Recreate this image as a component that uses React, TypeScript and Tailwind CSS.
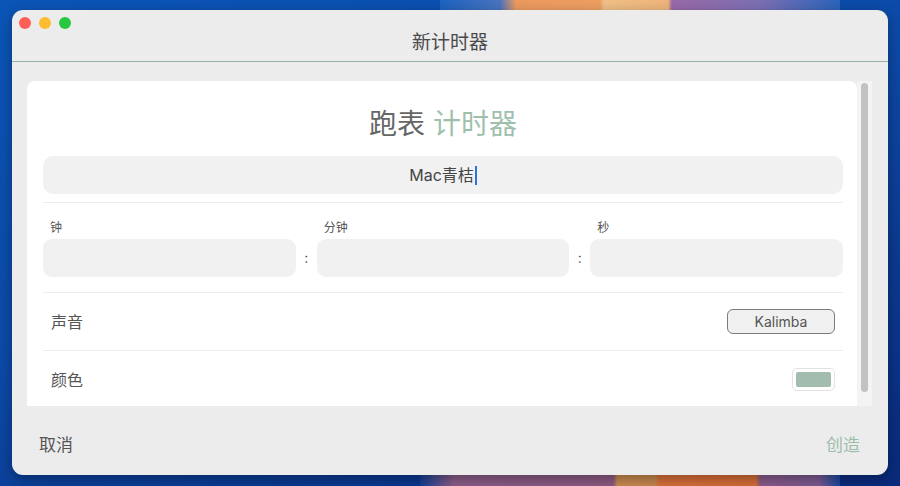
import React from "react";

const FONT = "font-['Inter','Noto_Sans_CJK_SC',sans-serif]";

const TimeField = ({ label }: { label: string }) => (
    <div className="flex flex-col flex-1">
        <span className="pl-[7px] text-[12px] leading-[16px] text-[#555]">{label}</span>
        <div className="mt-[3px] h-[38px] rounded-[9px] bg-[#f1f1f1]" />
    </div>
);

const Colon = () => (
    <div className="w-[21px] flex items-end justify-center h-[57px] pb-[10px] text-[14px] leading-[18px] text-[#555]">
        :
    </div>
);

export default function App() {
    return (
        <div
            className={`relative w-[900px] h-[486px] overflow-hidden bg-[linear-gradient(160deg,#0b55b8_0%,#0c4aa8_45%,#0a2a7c_100%)] ${FONT}`}
        >
            {/* wallpaper shapes peeking out around the window */}
            <div className="absolute top-0 left-[440px] w-[400px] h-[14px] bg-[linear-gradient(90deg,#1c63c0_0%,#4a74c0_15%,#ed9a5e_19%,#ef9f62_40%,#f0c088_41%,#efb57a_57%,#9a6aa8_58%,#7c70b4_80%,#2b64bc_100%)]" />
            <div className="absolute bottom-0 left-[420px] w-[420px] h-[14px] bg-[linear-gradient(90deg,#123f94_0%,#8a5c88_8%,#8c5a82_46%,#c98a50_47%,#c5884e_56%,#d8703a_57%,#d46c36_80%,#8a5a8a_81%,#7a5a90_95%,#1748a0_100%)]" />

            <div className="relative ml-[12px] mt-[10px] w-[876px] h-[465px] rounded-[11px] bg-[#ececed] shadow-[0_4px_14px_rgba(0,0,0,0.35)] flex flex-col overflow-hidden">
                {/* title bar */}
                <div className="relative h-[52px] border-b border-[#98b3a5] flex justify-center pt-[21px]">
                    <div className="absolute left-[7px] top-[7px] flex gap-[8px]">
                        <span className="w-[12px] h-[12px] rounded-full bg-[#fe5f57]" />
                        <span className="w-[12px] h-[12px] rounded-full bg-[#febc2e]" />
                        <span className="w-[12px] h-[12px] rounded-full bg-[#28c840]" />
                    </div>
                    <span className="text-[19px] leading-[24px] text-[#4a4a4a]">新计时器</span>
                </div>

                {/* scroll view */}
                <div className="flex flex-row pl-[15px] pr-[16px] pt-[19px]">
                    <div className="w-[830px] h-[325px] overflow-hidden rounded-t-[8px] bg-white pl-[16px] pr-[14px] pt-[26px]">
                        <h1 className="text-center text-[28px] leading-[34px]">
                            <span className="text-[#666]">跑表</span>{" "}
                            <span className="text-[#9fbfad]">计时器</span>
                        </h1>

                        <div className="mt-[15px] h-[38px] rounded-[10px] bg-[#f1f1f1] flex items-center justify-center text-[16px] text-[#444]">
                            <span>Mac青桔</span>
                            <span className="ml-[1px] w-[2px] h-[19px] bg-[#2b74e0]" />
                        </div>

                        <div className="mt-[8px] h-px bg-[#ececec]" />

                        <div className="mt-[17px] flex flex-row">
                            <TimeField label="钟" />
                            <Colon />
                            <TimeField label="分钟" />
                            <Colon />
                            <TimeField label="秒" />
                        </div>

                        <div className="mt-[15px] h-px bg-[#ececec]" />

                        <div className="h-[57px] flex items-center justify-between pl-[8px] pr-[8px]">
                            <span className="text-[16px] text-[#555]">声音</span>
                            <button className="w-[108px] h-[25px] rounded-[6px] border border-[#7a7a7a] bg-[#f0f0f0] text-[14px] text-[#555]">
                                Kalimba
                            </button>
                        </div>

                        <div className="h-px bg-[#ececec]" />

                        <div className="h-[57px] flex items-center justify-between pl-[8px] pr-[8px]">
                            <span className="text-[16px] text-[#555]">颜色</span>
                            <div className="w-[43px] h-[23px] rounded-[5px] border border-[#e2e2e2] bg-white p-[3px]">
                                <div className="w-full h-full rounded-[2px] bg-[#a3bcb0]" />
                            </div>
                        </div>
                    </div>

                    <div className="w-[15px] h-[325px] bg-[#f4f4f4] flex justify-center pt-[2px]">
                        <div className="w-[7px] h-[309px] rounded-full bg-[#c2c2c2]" />
                    </div>
                </div>

                {/* footer */}
                <div className="flex-1 flex items-center justify-between pl-[27px] pr-[28px] pt-[11px]">
                    <span className="text-[17px] text-[#555]">取消</span>
                    <span className="text-[17px] text-[#9dbdaa]">创造</span>
                </div>
            </div>
        </div>
    );
}
